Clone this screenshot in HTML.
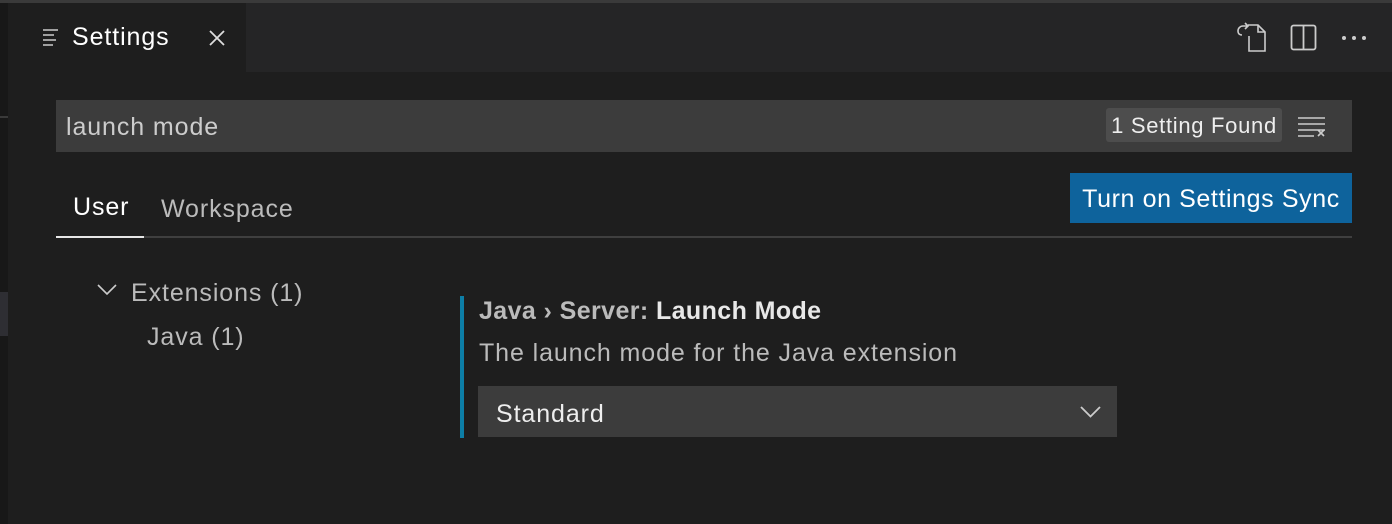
<!DOCTYPE html>
<html><head><style>
*{margin:0;padding:0;box-sizing:border-box}
body{width:1392px;height:524px;background:#1e1e1e;font-family:"Liberation Sans",sans-serif;position:relative;overflow:hidden;color:#ccc}
.a{position:absolute}
.t{font-size:25px;letter-spacing:0.9px;white-space:nowrap}
</style></head><body>
<div class="a" style="left:0;top:0;width:1392px;height:3px;background:#3a3a3a"></div>
<div class="a" style="left:0;top:3px;width:8px;height:521px;background:#181818"></div>
<div class="a" style="left:0;top:116px;width:8px;height:2px;background:#3a3a3a"></div>
<div class="a" style="left:0;top:292px;width:8px;height:44px;background:#2e2e33"></div>
<div class="a" style="left:246px;top:3px;width:1146px;height:69px;background:#252526"></div>
<svg class="a" style="left:42px;top:28px" width="20" height="20" viewBox="0 0 20 20" stroke="#ccc" stroke-width="1.5"><path d="M1 2h15M1 7h11M1 12h13M1 17h10"/></svg>
<div class="a t" style="left:72px;top:23px;color:#fff">Settings</div>
<svg class="a" style="left:208px;top:29px" width="18" height="18" viewBox="0 0 18 18" stroke="#ddd" stroke-width="1.8"><path d="M2 2L16 16M16 2L2 16"/></svg>
<svg class="a" style="left:1234px;top:22px" width="34" height="30" viewBox="0 0 34 30" fill="none" stroke="#ccc" stroke-width="1.6"><path d="M14 3h10l7 7v19H15V14"/><path d="M24 3v7h7"/><path d="M4 9a5 5 0 0 1 5-5h5M11 1l3 3-3 3"/><path d="M4 9c0 3 2 4 4 4"/></svg>
<svg class="a" style="left:1290px;top:24px" width="28" height="27" viewBox="0 0 28 27" fill="none" stroke="#ccc" stroke-width="1.8"><rect x="1.5" y="1.5" width="24" height="24" rx="2"/><path d="M13.5 1.5v24"/></svg>
<svg class="a" style="left:1340px;top:34px" width="30" height="8" fill="#ccc"><circle cx="4" cy="4" r="2"/><circle cx="14" cy="4" r="2"/><circle cx="24" cy="4" r="2"/></svg>
<div class="a" style="left:56px;top:100px;width:1296px;height:52px;background:#3c3c3c"></div>
<div class="a t" style="left:66px;top:113px;color:#ccc">launch mode</div>
<div class="a" style="left:1106px;top:108px;width:176px;height:34px;background:#4d4d4d;border-radius:3px;font-size:22px;letter-spacing:0.7px;color:#eee;line-height:36px;text-align:center;white-space:nowrap">1 Setting Found</div>
<svg class="a" style="left:1297px;top:116px" width="30" height="22" fill="none" stroke="#ccc" stroke-width="1.6"><path d="M1 2h27M1 8h27M1 14h27M1 20h16M21 14l6 6M27 14l-6 6"/></svg>
<div class="a t" style="left:73px;top:193px;color:#fff">User</div>
<div class="a t" style="left:161px;top:195px;color:#bbb">Workspace</div>
<div class="a" style="left:56px;top:236px;width:1296px;height:2px;background:#3f3f3f"></div>
<div class="a" style="left:56px;top:236px;width:88px;height:2px;background:#e6e6e6"></div>
<div class="a t" style="left:1070px;top:173px;width:282px;height:50px;background:#0e639c;color:#fff;line-height:52px;text-align:center;letter-spacing:0.6px">Turn on Settings Sync</div>
<svg class="a" style="left:97px;top:284px" width="20" height="12" fill="none" stroke="#ccc" stroke-width="1.6"><path d="M1 1l9 9 9-9"/></svg>
<div class="a t" style="left:131px;top:279px;color:#bbb">Extensions (1)</div>
<div class="a t" style="left:147px;top:323px;color:#bbb">Java (1)</div>
<div class="a" style="left:460px;top:296px;width:4px;height:142px;background:#0d7ea6"></div>
<div class="a t" style="left:479px;top:297px;font-weight:bold;letter-spacing:0.4px;color:#bbb">Java › Server: <span style="color:#e8e8e8">Launch Mode</span></div>
<div class="a t" style="left:479px;top:339px;color:#bbb">The launch mode for the Java extension</div>
<div class="a" style="left:478px;top:386px;width:639px;height:51px;background:#3c3c3c"></div>
<div class="a t" style="left:496px;top:400px;color:#eee">Standard</div>
<svg class="a" style="left:1080px;top:406px" width="21" height="12" fill="none" stroke="#ccc" stroke-width="1.8"><path d="M1 1l9.5 9.5L20 1"/></svg>
</body></html>
